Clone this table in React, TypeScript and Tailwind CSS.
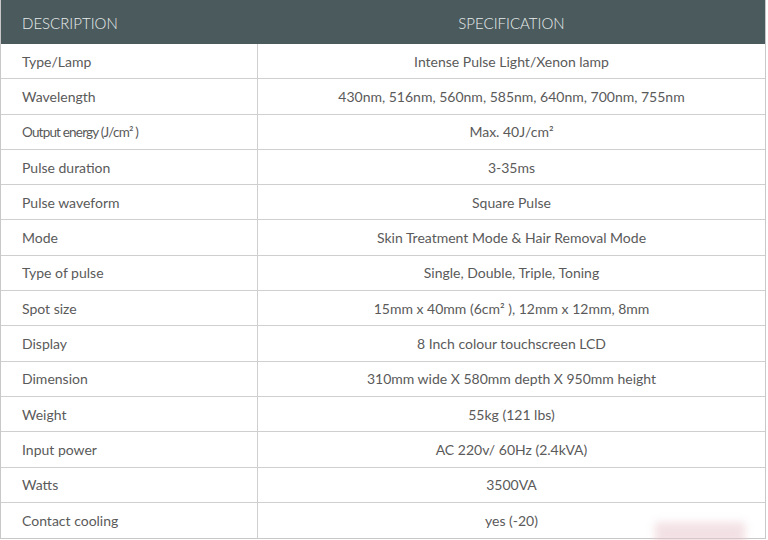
import React from 'react';

const rows: [string, React.ReactNode][] = [
  ['Type/Lamp', 'Intense Pulse Light/Xenon lamp'],
  ['Wavelength', '430nm, 516nm, 560nm, 585nm, 640nm, 700nm, 755nm'],
  ['Output energy (J/cm² )', 'Max. 40J/cm²'],
  ['Pulse duration', '3-35ms'],
  ['Pulse waveform', 'Square Pulse'],
  ['Mode', 'Skin Treatment Mode & Hair Removal Mode'],
  ['Type of pulse', 'Single, Double, Triple, Toning'],
  ['Spot size', '15mm x 40mm (6cm² ), 12mm x 12mm, 8mm'],
  ['Display', '8 Inch colour touchscreen LCD'],
  ['Dimension', '310mm wide X 580mm depth X 950mm height'],
  ['Weight', '55kg (121 lbs)'],
  ['Input power', 'AC 220v/ 60Hz (2.4kVA)'],
  ['Watts', '3500VA'],
  ['Contact cooling', 'yes (-20)'],
];

export default function App() {
  return (
    <div
      className="relative w-[768px] h-[540px] overflow-hidden bg-white text-[#5a5a5a]"
      style={{ fontFamily: "Lato, 'Open Sans', sans-serif" }}
    >
      <div className="w-[766px] border-l border-r border-b border-[#c8c8c8]">
        <div className="flex h-[44px] items-center bg-[#4a5a5d] pt-[3px] text-[15px] font-light uppercase text-[#e8ecec]">
          <div className="w-[257px] pl-[21px]">Description</div>
          <div className="flex-1 text-center">Specification</div>
        </div>
        {rows.map(([label, value], i) => (
          <div
            key={label}
            className={`flex h-[35.3px] items-center text-[14px] ${i < rows.length - 1 ? 'border-b border-[#cfcfcf]' : ''}`}
          >
            <div
              className={`flex h-full w-[257px] items-center border-r border-[#cfcfcf] pl-[21px] ${
                i === 2 ? 'tracking-[-0.06em] text-[13.5px]' : ''
              }`}
            >
              {label}
            </div>
            <div className="flex-1 text-center">{value}</div>
          </div>
        ))}
      </div>
      <div className="absolute left-[655px] top-[522px] h-[24px] w-[90px] bg-[#e7c3ca] opacity-50 blur-[4px]" />
    </div>
  );
}
